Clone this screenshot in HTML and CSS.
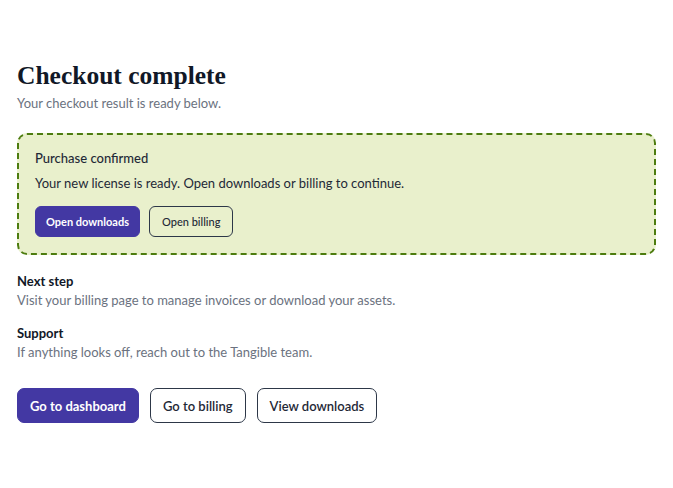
FILE: index.html
```html
<!DOCTYPE html>
<html>
<head>
<meta charset="utf-8">
<link rel="stylesheet" href="styles.css">
</head>
<body>
<main class="page">
  <h1 class="title">Checkout complete</h1>
  <p class="subtitle">Your checkout result is ready below.</p>
  <section class="notice">
    <h2 class="notice-title">Purchase confirmed</h2>
    <p class="notice-text">Your new license is ready. Open downloads or billing to continue.</p>
    <div class="notice-actions">
      <button class="btn btn-sm btn-primary">Open downloads</button>
      <button class="btn btn-sm btn-outline">Open billing</button>
    </div>
  </section>
  <section class="info">
    <h3 class="info-title">Next step</h3>
    <p class="info-text">Visit your billing page to manage invoices or download your assets.</p>
  </section>
  <section class="info">
    <h3 class="info-title">Support</h3>
    <p class="info-text">If anything looks off, reach out to the Tangible team.</p>
  </section>
  <div class="actions">
    <button class="btn btn-primary">Go to dashboard</button>
    <button class="btn btn-outline">Go to billing</button>
    <button class="btn btn-outline">View downloads</button>
  </div>
</main>
</body>
</html>
```

FILE: styles.css
```css
* { box-sizing: border-box; }
html, body { margin: 0; padding: 0; background: #ffffff; }
body {
  font-family: Lato, "Open Sans", sans-serif;
  color: #1a202c;
}
.page {
  padding: 61px 17px 0 17px;
}
.title {
  font-family: "Liberation Serif", "DejaVu Serif", serif;
  font-weight: 700;
  font-size: 25.5px;
  line-height: 30px;
  margin: 0;
  color: #111827;
}
.subtitle {
  margin: 3px 0 0 0;
  font-size: 13px;
  line-height: 18px;
  color: #6b7280;
}
.notice {
  margin-top: 21px;
  border: 2px dashed #4d7c0f;
  border-radius: 10px;
  background: #e9f0cc;
  padding: 15px 16px 16px 16px;
}
.notice-title {
  margin: 0;
  font-size: 13px;
  font-weight: 500;
  line-height: 17px;
  color: #1f2937;
}
.notice-text {
  margin: 8px 0 0 0;
  font-size: 13px;
  line-height: 17px;
  color: #1f2937;
}
.notice-actions {
  display: flex;
  gap: 9px;
  margin-top: 14px;
}
.btn {
  font-family: Lato, "Open Sans", sans-serif;
  font-size: 13px;
  font-weight: 600;
  height: 35px;
  padding: 0 12px;
  border-radius: 7px;
  border: 1px solid #2d3748;
  background: #ffffff;
  color: #1f2937;
  cursor: pointer;
}
.btn-sm {
  font-size: 11px;
  height: 31px;
  padding: 0 10px;
  border-radius: 6px;
}
.btn-primary {
  background: #4338a3;
  border-color: #4338a3;
  color: #ffffff;
  font-weight: 700;
}
.btn-outline.btn-sm {
  background: transparent;
  font-weight: 500;
  padding: 0 12px;
}
.info {
  margin-top: 17px;
}
.info + .info {
  margin-top: 15px;
}
.info-title {
  margin: 0;
  font-size: 13px;
  font-weight: 700;
  line-height: 18px;
  color: #111827;
}
.info-text {
  margin: 1px 0 0 0;
  font-size: 13px;
  line-height: 18px;
  color: #6b7280;
}
.actions {
  display: flex;
  gap: 11px;
  margin-top: 27px;
}
```
